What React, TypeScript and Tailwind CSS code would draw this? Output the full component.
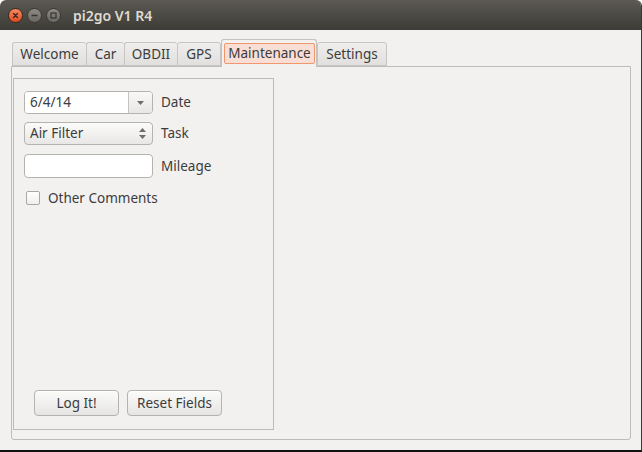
import React from "react";

const font = { fontFamily: '"Noto Sans", "DejaVu Sans", sans-serif' };

function TitleButton({ kind }: { kind: "close" | "min" | "max" }) {
  const isClose = kind === "close";
  return (
    <div
      className={
        "flex h-[15px] w-[15px] items-center justify-center rounded-full border " +
        (isClose
          ? "border-[#3a2a22] bg-gradient-to-b from-[#f58b63] to-[#df4a1a]"
          : "border-[#3a3934] bg-gradient-to-b from-[#8e8b83] to-[#6a6861]")
      }
    >
      <svg width="9" height="9" viewBox="0 0 9 9">
        {kind === "close" && (
          <path d="M2.5 2.5 L6.5 6.5 M6.5 2.5 L2.5 6.5" stroke="#3c2a22" strokeWidth="1.4" strokeLinecap="round" />
        )}
        {kind === "min" && <path d="M1.5 4.5 H7.5" stroke="#35342f" strokeWidth="1.4" />}
        {kind === "max" && <rect x="2" y="2" width="5" height="5" fill="none" stroke="#35342f" strokeWidth="1.2" />}
      </svg>
    </div>
  );
}

function Tab({ label, width, closing }: { label: string; width: string; closing?: boolean }) {
  return (
    <div
      className={
        width +
        " flex h-[24px] items-center justify-center rounded-t-[3px] border border-[#c6c5c1] bg-gradient-to-b from-[#efeeec] to-[#e1e0de] text-[13.5px] text-[#3c3c3c] " +
        (closing ? "" : "border-r-0")
      }
    >
      {label}
    </div>
  );
}

function Arrow({ up }: { up?: boolean }) {
  return (
    <svg width="7" height="4" viewBox="0 0 7 4">
      <path d={up ? "M0 4 L3.5 0 L7 4 Z" : "M0 0 L7 0 L3.5 4 Z"} fill="#6e6d69" />
    </svg>
  );
}

function FieldRow({ children, label }: { children: React.ReactNode; label: string }) {
  return (
    <div className="flex items-center gap-[8px]">
      {children}
      <span className="text-[13.5px] text-[#3c3c3c]">{label}</span>
    </div>
  );
}

function PushButton({ label, width }: { label: string; width: string }) {
  return (
    <div
      className={
        width +
        " flex h-[26px] items-center justify-center rounded-[4px] border border-[#b4b3af] bg-gradient-to-b from-[#fbfbfa] to-[#e6e5e3] text-[13.5px] text-[#3c3c3c] shadow-[inset_0_1px_0_#ffffff]"
      }
    >
      {label}
    </div>
  );
}

export default function App() {
  return (
    <div className="h-[452px] w-[642px] bg-white" style={font}>
      <div className="flex h-[452px] w-[642px] flex-col overflow-hidden rounded-t-[6px] border-b-2 border-r border-b-[#111111] border-r-[#3a3934]">
        {/* title bar */}
        <div className="flex h-[30px] shrink-0 items-center bg-gradient-to-b from-[#5b5952] to-[#3d3c37] pl-[8px]">
          <div className="flex items-center gap-[4px]">
            <TitleButton kind="close" />
            <TitleButton kind="min" />
            <TitleButton kind="max" />
          </div>
          <span className="ml-[12px] text-[14px] font-semibold text-[#dfdbd2]">pi2go V1 R4</span>
        </div>

        {/* client area */}
        <div className="flex flex-1 flex-col bg-[#f2f1f0] pl-[12px] pr-[10px] pt-[9px]">
          <div className="flex h-[27px] items-end">
            <Tab label="Welcome" width="w-[74px]" />
            <Tab label="Car" width="w-[38px]" />
            <Tab label="OBDII" width="w-[53px]" />
            <Tab label="GPS" width="w-[44px]" closing />
            <div className="relative z-10 -mb-px flex h-[28px] w-[96px] items-start rounded-t-[3px] border border-b-0 border-[#c2c1bd] bg-[#f2f1f0] pl-[2px] pr-[1px] pt-[3px]">
              <div className="flex h-[21px] flex-1 items-center justify-center rounded-[2px] border border-[#f0976f] bg-[#f8ded4] text-[13.5px] text-[#3c3c3c]">
                Maintenance
              </div>
            </div>
            <Tab label="Settings" width="w-[70px]" closing />
          </div>

          {/* notebook page */}
          <div className="-ml-px flex h-[374px] flex-col rounded-b-[3px] border border-[#bdbcb8] bg-[#f2f1f0] pb-[9px] pl-[1px] pt-[11px]">
            <div className="flex h-[352px] w-[261px] flex-col border border-[#bcbbb7] px-[10px] pt-[12px]">
              <div className="flex flex-col gap-[8px]">
                <FieldRow label="Date">
                  <div className="flex h-[23px] w-[129px] overflow-hidden rounded-[4px] border border-[#b4b3af]">
                    <div className="flex flex-1 items-center bg-white pl-[5px] text-[13.5px] text-[#3c3c3c]">6/4/14</div>
                    <div className="flex w-[24px] items-center justify-center border-l border-[#c4c3bf] bg-gradient-to-b from-[#f8f8f7] to-[#e8e7e5]">
                      <Arrow />
                    </div>
                  </div>
                </FieldRow>
                <FieldRow label="Task">
                  <div className="flex h-[23px] w-[129px] items-center justify-between rounded-[4px] border border-[#b4b3af] bg-gradient-to-b from-[#fbfbfa] to-[#e8e7e5] pl-[5px] pr-[6px] text-[13.5px] text-[#3c3c3c]">
                    <span>Air Filter</span>
                    <div className="flex flex-col gap-[3px]">
                      <Arrow up />
                      <Arrow />
                    </div>
                  </div>
                </FieldRow>
                <div className="mt-px">
                  <FieldRow label="Mileage">
                    <div className="h-[24px] w-[129px] rounded-[4px] border border-[#b4b3af] bg-white" />
                  </FieldRow>
                </div>
              </div>
              <div className="mt-[10px] flex items-center gap-[8px] pl-[2px]">
                <div className="h-[14px] w-[14px] rounded-[2px] border border-[#a9a8a4] bg-gradient-to-b from-white to-[#f0efed]" />
                <span className="text-[13.5px] text-[#3c3c3c]">Other Comments</span>
              </div>
              <div className="mt-auto flex gap-[8px] pb-[13px] pl-[10px]">
                <PushButton label="Log It!" width="w-[85px]" />
                <PushButton label="Reset Fields" width="w-[95px]" />
              </div>
            </div>
          </div>
        </div>
      </div>
    </div>
  );
}
